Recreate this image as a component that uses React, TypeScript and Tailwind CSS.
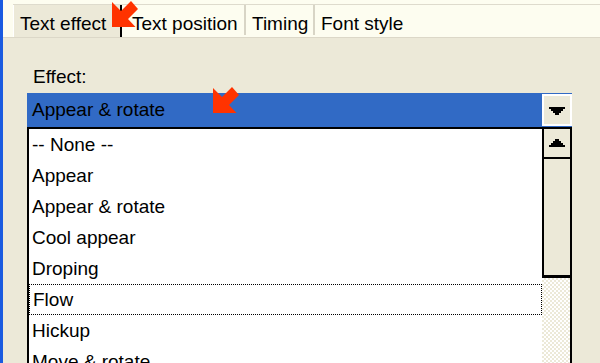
const items = [
  "-- None --",
  "Appear",
  "Appear & rotate",
  "Cool appear",
  "Droping",
  "Flow",
  "Hickup",
  "Move & rotate",
];

function Pointer({ className }: { className: string }) {
  return (
    <svg className={className} width="26" height="26" viewBox="0 0 26 26">
      <polygon points="0,1 0,26 23.5,26 16,18 26,8 19,0 9,10" fill="#ff3300" />
    </svg>
  );
}

function DownArrow() {
  return (
    <svg width="16" height="8" viewBox="0 0 16 8">
      <rect x="0" y="0" width="16" height="2" fill="#000" />
      <rect x="2" y="2" width="12" height="2" fill="#000" />
      <rect x="4" y="4" width="8" height="2" fill="#000" />
      <rect x="6" y="6" width="4" height="2" fill="#000" />
    </svg>
  );
}

function UpArrow() {
  return (
    <svg width="16" height="8" viewBox="0 0 16 8">
      <rect x="6" y="0" width="4" height="2" fill="#000" />
      <rect x="4" y="2" width="8" height="2" fill="#000" />
      <rect x="2" y="4" width="12" height="2" fill="#000" />
      <rect x="0" y="6" width="16" height="2" fill="#000" />
    </svg>
  );
}

export default function App() {
  return (
    <div
      className="relative flex h-[363px] w-[600px] overflow-hidden bg-[#ece9d8] text-[19px] leading-[22px] text-black"
      style={{ fontFamily: '"Liberation Sans", Arial, sans-serif' }}
    >
      <div className="w-[3px] shrink-0 bg-[#1a5be0]" />
      <div className="flex flex-1 flex-col">
        {/* tab strip */}
        <div className="flex h-[38px] shrink-0 items-end border-b border-[#dcd8c8] bg-[#fdfdf0] pl-[10px]">
          <div className="flex h-[33px] flex-1 border-t border-[#dedbcd]">
            <div className="flex w-[107px] items-center border-l border-white bg-[#ece9d8] pl-[6px] pt-[5px]">
              Text effect
            </div>
            <div className="w-[2px] bg-black" />
            <div className="flex w-[122px] items-center pl-[10px] pt-[5px]">Text position</div>
            <div className="h-[30px] w-[2px] bg-[#d8d5c6]" />
            <div className="flex w-[67px] items-center pl-[6px] pt-[5px]">Timing</div>
            <div className="h-[30px] w-[2px] bg-[#d8d5c6]" />
            <div className="flex items-center pl-[6px] pt-[5px]">Font style</div>
          </div>
        </div>

        {/* panel */}
        <div className="flex min-h-0 flex-1 flex-col pl-[24px]">
          <div className="mt-[28px] pl-[6px]">Effect:</div>
          <div className="mt-[5px] flex h-[34px] w-[545px] shrink-0 bg-[#316ac5]">
            <div className="flex flex-1 items-center pl-[5px]">Appear &amp; rotate</div>
            <div className="my-[1px] flex w-[30px] items-center justify-center border-2 border-white bg-[#ece9d8] pt-[1px]">
              <DownArrow />
            </div>
          </div>
          <div className="flex min-h-0 w-[545px] flex-1 border-x-2 border-t-2 border-black">
            <div className="flex flex-1 flex-col bg-white">
              {items.map((item) => (
                <div
                  key={item}
                  className={`flex h-[31px] shrink-0 items-center whitespace-pre pl-[3px] ${
                    item === "Flow" ? "border border-dotted border-black pl-[2px]" : ""
                  }`}
                >
                  {item}
                </div>
              ))}
            </div>
            <div className="flex w-[28px] flex-col">
              <div className="flex h-[30px] shrink-0 items-center justify-center border-b-2 border-l-2 border-black bg-[#ece9d8]">
                <UpArrow />
              </div>
              <div className="h-[119px] shrink-0 border-b-[3px] border-l-2 border-black bg-[#ece9d8]" />
              <div className="flex-1 bg-[repeating-conic-gradient(#ece9d8_0_25%,#ffffff_0_50%)] bg-[length:4px_4px]" />
            </div>
          </div>
        </div>
      </div>

      <Pointer className="absolute left-[112px] top-[1px]" />
      <Pointer className="absolute left-[213px] top-[87px]" />
    </div>
  );
}
